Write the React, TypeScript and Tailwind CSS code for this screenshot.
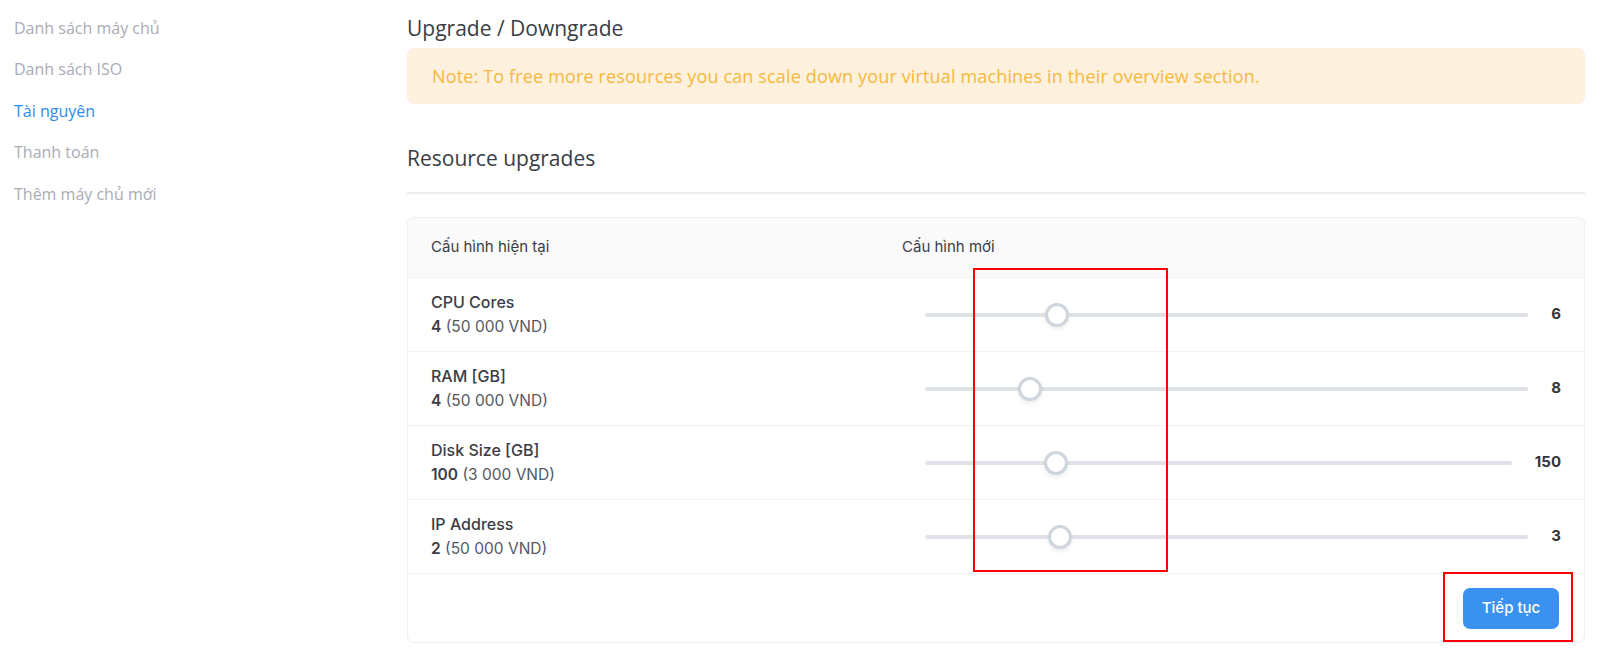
import React from "react";

const rows = [
  { label: "CPU Cores", cur: "4", price: "(50 000 VND)", pct: 21.9, value: "6" },
  { label: "RAM [GB]", cur: "4", price: "(50 000 VND)", pct: 17.4, value: "8" },
  { label: "Disk Size [GB]", cur: "100", price: "(3 000 VND)", pct: 22.4, value: "150" },
  { label: "IP Address", cur: "2", price: "(50 000 VND)", pct: 22.4, value: "3" },
];

const side = ["Danh sách máy chủ", "Danh sách ISO", "Tài nguyên", "Thanh toán", "Thêm máy chủ mới"];

export default function App() {
  return (
    <div className="relative w-[1600px] h-[659px] bg-white overflow-hidden flex" style={{ fontFamily: "'Open Sans', Roboto, sans-serif" }}>
      <aside className="w-[407px] shrink-0 pl-[14px] pt-[7px] flex flex-col">
        {side.map((s) => (
          <div
            key={s}
            className={`h-[41.5px] flex items-center text-[16px] ${s === "Tài nguyên" ? "text-[#2d8cf0]" : "text-[#a9abb6]"}`}
          >
            {s}
          </div>
        ))}
      </aside>
      <main className="w-[1178px] shrink-0 pt-[14px]">
        <h1 className="text-[21px] leading-[28px] text-[#3a3d44]">Upgrade / Downgrade</h1>
        <div className="mt-[6px] h-[56px] rounded-[7px] bg-[#fdf1de] flex items-center pl-[25px] text-[18px] tracking-[0.15px] text-[#f7b83c]">
          Note: To free more resources you can scale down your virtual machines in their overview section.
        </div>
        <h2 className="mt-[40px] text-[21px] leading-[28px] text-[#3a3d44]">Resource upgrades</h2>
        <div className="mt-[20px] h-[2px] bg-[#ededee]" />
        <div
          className="mt-[23px] border border-[#eceef1] rounded-[7px] overflow-hidden"
          style={{ fontFamily: "Inter, 'Noto Sans', sans-serif" }}
        >
          <div className="h-[60px] bg-[#fafafa] border-b border-[#f0f1f3] flex items-center text-[15px] text-[#3b3d44]">
            <div className="w-[494px] pl-[23px]">Cấu hình hiện tại</div>
            <div>Cấu hình mới</div>
          </div>
          {rows.map((r) => (
            <div key={r.label} className="h-[74px] border-b border-[#f0f1f3] flex items-center">
              <div className="w-[494px] pl-[23px] leading-[23.5px]">
                <div className="text-[16px] font-medium text-[#3b3d46]">{r.label}</div>
                <div className="text-[15.5px] text-[#55575f]">
                  <span className="font-semibold text-[#3b3d46]">{r.cur}</span> {r.price}
                </div>
              </div>
              <div className="flex-1 flex items-center pl-[23px] pr-[23px] gap-[23px]">
                <div className="relative flex-1 h-[4px] bg-[#dfe2e7] rounded-full">
                  <div
                    className="absolute top-1/2 w-[24px] h-[24px] -translate-x-1/2 -translate-y-1/2 rounded-full bg-white border-[3px] border-[#cfd5dd] shadow-[0_2px_4px_rgba(0,0,0,0.08)]"
                    style={{ left: `${r.pct}%` }}
                  />
                </div>
                <div className="text-[15px] font-bold text-[#33353c]">{r.value}</div>
              </div>
            </div>
          ))}
          <div className="h-[68px] flex items-start justify-end pr-[25px] pt-[14px]">
            <button className="w-[96px] h-[41px] rounded-[7px] bg-[#3a91f0] text-white text-[15px] font-medium">
              Tiếp tục
            </button>
          </div>
        </div>
      </main>
      <div className="absolute left-[973px] top-[268px] w-[195px] h-[304px] border-2 border-[#ff0000]" />
      <div className="absolute left-[1443px] top-[572px] w-[130px] h-[70px] border-2 border-[#ff0000]" />
    </div>
  );
}
